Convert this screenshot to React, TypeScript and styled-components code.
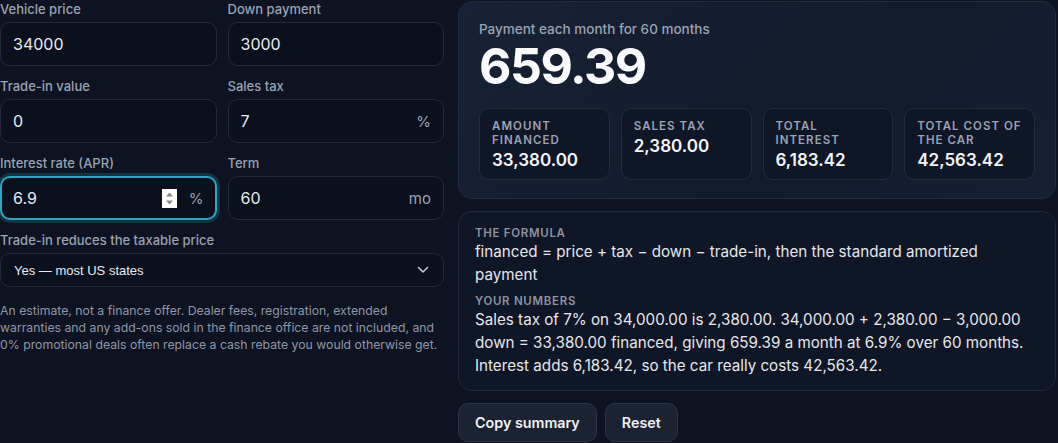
import { createGlobalStyle, styled } from "styled-components";

const GlobalStyle = createGlobalStyle`
  html, body {
    margin: 0;
    padding: 0;
    background: #0d1320;
    font-family: Inter, "Noto Sans", sans-serif;
    color: #e5e7eb;
  }
  * { box-sizing: border-box; }
`;

interface Field {
  label: string;
  value: string;
  suffix?: string;
  focused?: boolean;
}

const fields: Field[] = [
  { label: "Vehicle price", value: "34000" },
  { label: "Down payment", value: "3000" },
  { label: "Trade-in value", value: "0" },
  { label: "Sales tax", value: "7", suffix: "%" },
  { label: "Interest rate (APR)", value: "6.9", suffix: "%", focused: true },
  { label: "Term", value: "60", suffix: "mo" },
];

const stats = [
  { label: "Amount financed", value: "33,380.00" },
  { label: "Sales tax", value: "2,380.00" },
  { label: "Total interest", value: "6,183.42" },
  { label: "Total cost of the car", value: "42,563.42" },
];

function Spinner() {
  return (
    <SpinBox>
      <svg width="15" height="19" viewBox="0 0 15 19">
        <path d="M4 7.5 L7.5 3.5 L11 7.5 Z" fill="#8a8a8a" />
        <path d="M4 11.5 L7.5 15.5 L11 11.5 Z" fill="#8a8a8a" />
      </svg>
    </SpinBox>
  );
}

export default function App() {
  return (
    <>
      <GlobalStyle />
      <Page>
        <LeftColumn>
          <FieldGrid>
            {fields.map((f) => (
              <FieldBlock key={f.label}>
                <Label>{f.label}</Label>
                <InputBox $focused={!!f.focused}>
                  <InputValue>{f.value}</InputValue>
                  {f.focused && <Spinner />}
                  {f.suffix && <Suffix>{f.suffix}</Suffix>}
                </InputBox>
              </FieldBlock>
            ))}
          </FieldGrid>
          <FieldBlock>
            <Label>Trade-in reduces the taxable price</Label>
            <SelectBox>
              <span>Yes — most US states</span>
              <svg width="12" height="8" viewBox="0 0 12 8">
                <path
                  d="M1.5 1.5 L6 6 L10.5 1.5"
                  fill="none"
                  stroke="#c7ccd6"
                  strokeWidth="1.5"
                  strokeLinecap="round"
                  strokeLinejoin="round"
                />
              </svg>
            </SelectBox>
          </FieldBlock>
          <Disclaimer>
            An estimate, not a finance offer. Dealer fees, registration, extended
            warranties and any add-ons sold in the finance office are not
            included, and 0% promotional deals often replace a cash rebate you
            would otherwise get.
          </Disclaimer>
        </LeftColumn>

        <RightColumn>
          <ResultPanel>
            <ResultCaption>Payment each month for 60 months</ResultCaption>
            <BigNumber>659.39</BigNumber>
            <StatGrid>
              {stats.map((s) => (
                <StatCard key={s.label}>
                  <StatLabel>{s.label}</StatLabel>
                  <StatValue>{s.value}</StatValue>
                </StatCard>
              ))}
            </StatGrid>
          </ResultPanel>

          <FormulaPanel>
            <SectionTitle>The formula</SectionTitle>
            <FormulaText>
              financed = price + tax − down − trade-in, then the standard
              amortized payment
            </FormulaText>
            <SectionTitle $spaced>Your numbers</SectionTitle>
            <FormulaText>
              Sales tax of 7% on 34,000.00 is 2,380.00. 34,000.00 + 2,380.00 −
              3,000.00 down = 33,380.00 financed, giving 659.39 a month at 6.9%
              over 60 months. Interest adds 6,183.42, so the car really costs
              42,563.42.
            </FormulaText>
          </FormulaPanel>

          <ButtonRow>
            <Button>Copy summary</Button>
            <Button>Reset</Button>
          </ButtonRow>
        </RightColumn>
      </Page>
    </>
  );
}

const Page = styled.div`
  display: grid;
  grid-template-columns: 444px 598px;
  column-gap: 14px;
  width: 1058px;
  height: 443px;
  overflow: hidden;
`;

const LeftColumn = styled.div`
  display: flex;
  flex-direction: column;
  padding-top: 1px;
`;

const FieldGrid = styled.div`
  display: grid;
  grid-template-columns: 1fr 1fr;
  column-gap: 11px;
  row-gap: 12px;
  margin-bottom: 12px;
`;

const FieldBlock = styled.div`
  display: flex;
  flex-direction: column;
  gap: 5px;
`;

const Label = styled.label`
  font-size: 13px;
  line-height: 16px;
  font-weight: 500;
  color: #9aa3b2;
`;

const InputBox = styled.div<{ $focused: boolean }>`
  position: relative;
  height: 44px;
  display: flex;
  align-items: center;
  padding: 0 ${(p) => (p.$focused ? "11px" : "12px")};
  border-radius: 10px;
  background: #0a101c;
  border: ${(p) => (p.$focused ? "2px solid #2ba6c2" : "1px solid #222a39")};
  box-shadow: ${(p) =>
    p.$focused ? "0 0 0 3px rgba(43, 166, 194, 0.22)" : "none"};
`;

const InputValue = styled.span`
  flex: 1;
  font-size: 16px;
  color: #e8ebf0;
`;

const Suffix = styled.span`
  font-size: 15px;
  color: #9aa3b2;
  margin-left: 12px;
`;

const SpinBox = styled.span`
  display: flex;
  width: 15px;
  height: 19px;
  background: #ffffff;
`;

const SelectBox = styled.div`
  height: 34px;
  display: flex;
  align-items: center;
  justify-content: space-between;
  padding: 0 14px 0 13px;
  border-radius: 10px;
  background: #0a101c;
  border: 1px solid #222a39;
  font-family: "Liberation Sans", Arial, sans-serif;
  font-size: 13px;
  color: #e8ebf0;
`;

const Disclaimer = styled.p`
  margin: 15px 0 0;
  font-size: 12.25px;
  line-height: 17px;
  color: #8f97a6;
`;

const RightColumn = styled.div`
  display: flex;
  flex-direction: column;
  padding-top: 1px;
`;

const ResultPanel = styled.section`
  height: 198px;
  padding: 18px 20px 0;
  border-radius: 14px;
  border: 1px solid #222b3b;
  background: linear-gradient(135deg, #182236 0%, #121a2b 60%, #162033 100%);
`;

const ResultCaption = styled.div`
  font-size: 13.5px;
  line-height: 18px;
  font-weight: 500;
  color: #9aa3b2;
`;

const BigNumber = styled.div`
  font-size: 50px;
  line-height: 54px;
  font-weight: 700;
  color: #f8fafc;
  letter-spacing: -1.5px;
  margin-top: 1px;
`;

const StatGrid = styled.div`
  display: grid;
  grid-template-columns: repeat(4, 1fr);
  gap: 11px;
  margin-top: 15px;
`;

const StatCard = styled.div`
  height: 72px;
  padding: 10px 12px 0;
  border-radius: 10px;
  border: 1px solid #232c3c;
  background: #0f1626;
`;

const StatLabel = styled.div`
  font-size: 11.5px;
  line-height: 14px;
  font-weight: 600;
  letter-spacing: 0.09em;
  text-transform: uppercase;
  color: #9aa3b2;
`;

const StatValue = styled.div`
  font-size: 17px;
  line-height: 22px;
  font-weight: 600;
  color: #f3f5f8;
  margin-top: 2px;
`;

const FormulaPanel = styled.section`
  margin-top: 12px;
  height: 180px;
  padding: 15px 16px 0;
  border-radius: 14px;
  border: 1px solid #222b3b;
  background: #0f1625;
`;

const SectionTitle = styled.div<{ $spaced?: boolean }>`
  font-size: 11.5px;
  line-height: 13px;
  font-weight: 600;
  letter-spacing: 0.06em;
  text-transform: uppercase;
  color: #8b93a3;
  margin-top: ${(p) => (p.$spaced ? "9px" : "0")};
`;

const FormulaText = styled.div`
  max-width: 558px;
  font-size: 15.2px;
  line-height: 23px;
  color: #e5e7eb;
`;

const ButtonRow = styled.div`
  display: flex;
  gap: 8px;
  margin-top: 12px;
`;

const Button = styled.button`
  height: 39px;
  padding: 0 16px;
  border-radius: 10px;
  border: 1px solid #2c3546;
  background: #1b2332;
  color: #eef1f5;
  font-family: Inter, "Noto Sans", sans-serif;
  font-size: 14.3px;
  font-weight: 600;
`;
